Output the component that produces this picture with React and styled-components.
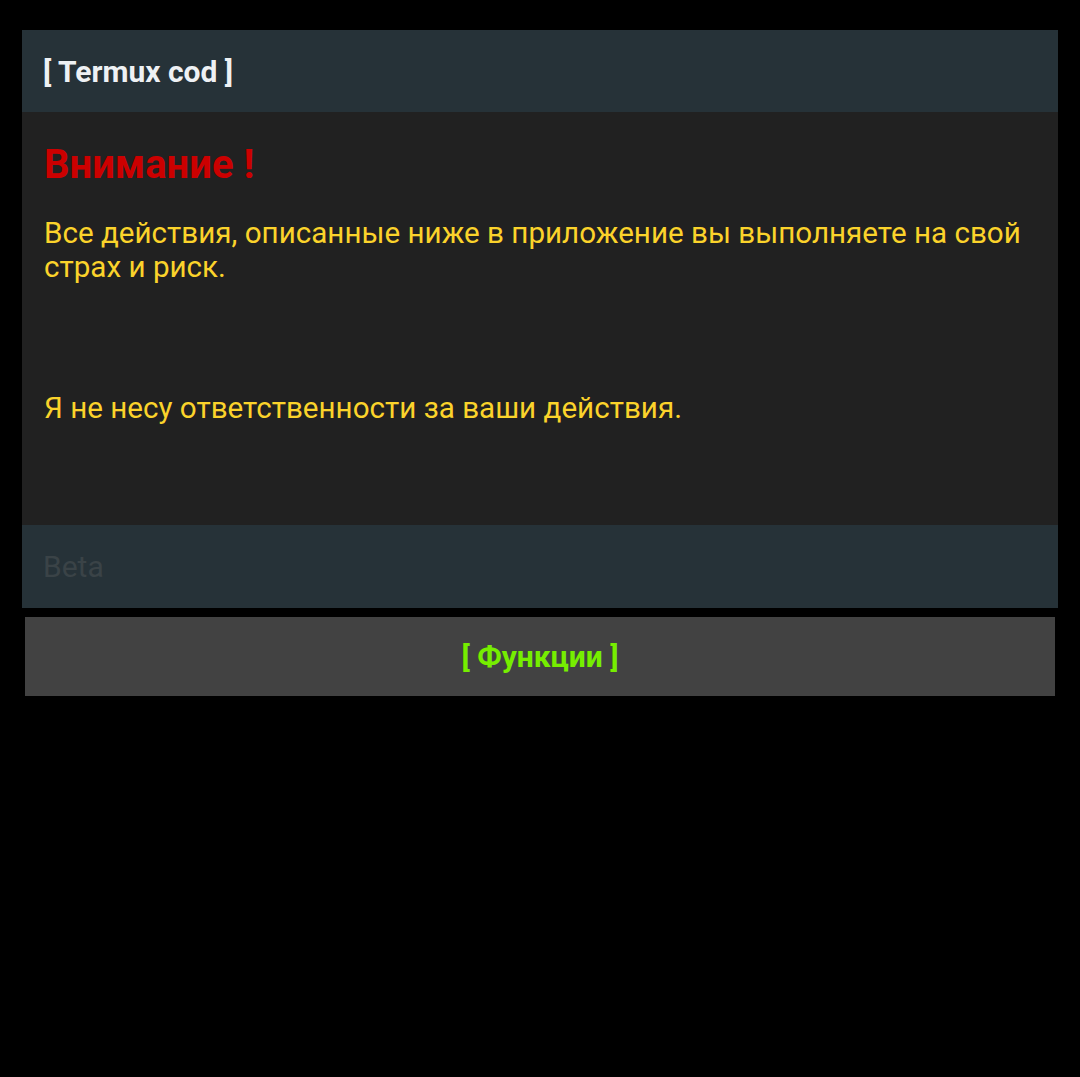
import styled, { createGlobalStyle } from 'styled-components';

const GlobalStyle = createGlobalStyle`
  html, body {
    margin: 0;
    padding: 0;
    background: #000;
  }
  body {
    font-family: Roboto, 'Noto Sans', sans-serif;
  }
`;

const App = () => {
  return (
    <>
      <GlobalStyle />
      <Page>
        <Card>
          <Header>[ Termux cod ]</Header>
          <Body>
            <Warning>Внимание !</Warning>
            <Text>Все действия, описанные ниже в приложение вы выполняете на свой страх и риск.</Text>
            <Text $gap>Я не несу ответственности за ваши действия.</Text>
          </Body>
          <Footer>Beta</Footer>
        </Card>
        <ActionButton>[ Функции ]</ActionButton>
      </Page>
    </>
  );
};

export default App;

const Page = styled.div`
  width: 1080px;
  height: 1077px;
  box-sizing: border-box;
  padding: 30px 22px 0;
  display: flex;
  flex-direction: column;
  gap: 9px;
`;
const Card = styled.div`
  display: flex;
  flex-direction: column;
`;
const Header = styled.div`
  height: 82px;
  background: #263238;
  color: #eef1f4;
  font-size: 30px;
  font-weight: bold;
  padding: 0 21px;
  display: flex;
  align-items: center;
`;
const Body = styled.div`
  height: 413px;
  box-sizing: border-box;
  background: #212121;
  padding: 29px 12px 0 22px;
`;
const Warning = styled.div`
  color: #cc0000;
  font-size: 40px;
  font-weight: bold;
  line-height: 48px;
  margin-bottom: 27px;
`;
const Text = styled.div`
  color: #fbd32b;
  font-size: 29.6px;
  line-height: 34px;
  margin-top: ${({ $gap }) => ($gap ? '107px' : '0')};
`;
const Footer = styled.div`
  height: 83px;
  background: #263238;
  color: #3a4347;
  font-size: 30px;
  padding: 0 21px;
  display: flex;
  align-items: center;
`;
const ActionButton = styled.div`
  height: 79px;
  margin: 0 3px;
  background: #424242;
  color: #76ee00;
  font-size: 30px;
  font-weight: bold;
  display: flex;
  align-items: center;
  justify-content: center;
`;
